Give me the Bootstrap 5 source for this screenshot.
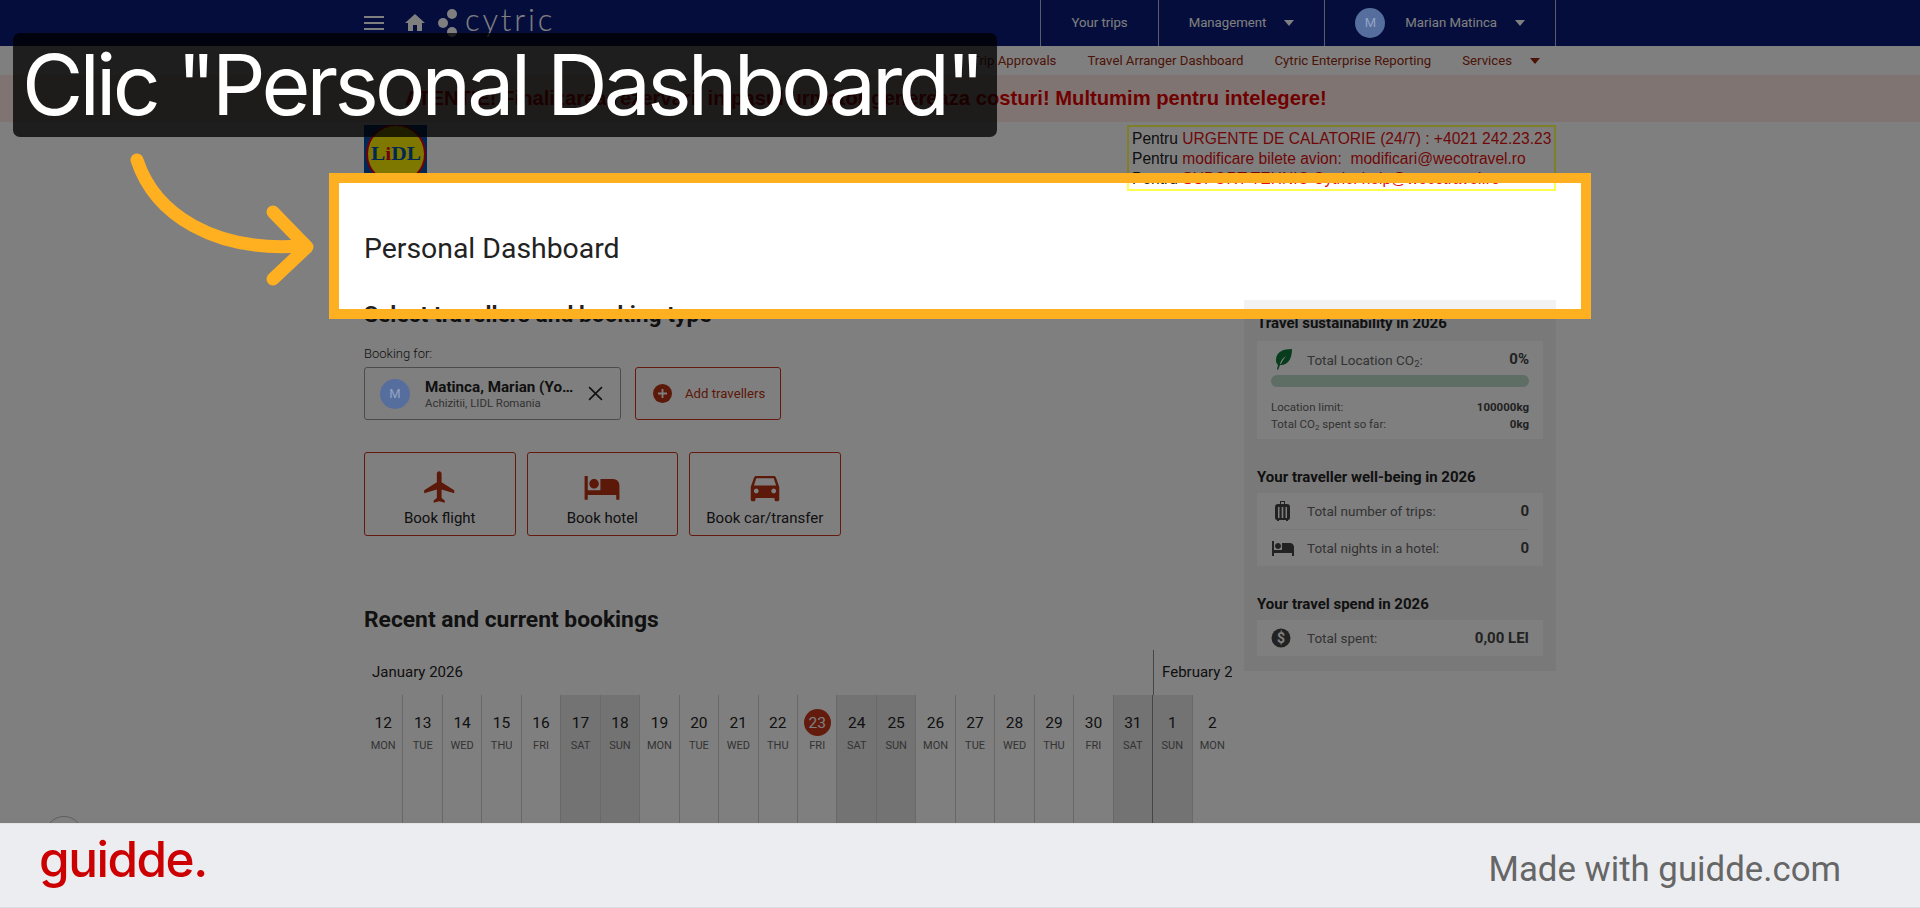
<!DOCTYPE html>
<html lang="en">
<head>
    <meta charset="UTF-8">
    <title>cytric - Personal Dashboard</title>
    <link href="https://cdn.jsdelivr.net/npm/bootstrap@5.3.0/dist/css/bootstrap.min.css" rel="stylesheet">
    <style>
        html, body { height: 100%; }
        body { font-family: Roboto, "Liberation Sans", sans-serif; color: #222; background: #fff; overflow: hidden; }
        .screen { position: relative; height: 908px; overflow: hidden; display: flex; flex-direction: column; }
        .page-body { flex: 1 1 auto; min-height: 0; overflow: hidden; }
        .wrap { width: 1192px; margin: 0 auto; }

        /* top bars */
        .top-bar { background: #081a78; height: 46px; color: #fff; font-size: 13.2px; padding: 0; }
        .top-item { height: 46px; padding: 0 30px 1px; border-left: 1px solid rgba(255,255,255,.7); display: flex; align-items: center; }
        .top-item.last-item { border-right: 1px solid rgba(255,255,255,.7); }
        .caret-down { width: 0; height: 0; border-left: 5px solid transparent; border-right: 5px solid transparent; border-top: 6px solid currentColor; margin-left: 18px; }
        .avatar { position: relative; z-index: 11; width: 30px; height: 30px; background: #566e9e; color: #93a3c2; font-size: 13px; display: flex; align-items: center; justify-content: center; flex: none; }
        .home-ico { margin-left: 19px; }
        .dots-ico { margin-left: 10px; }
        .brand-name { font-family: Lato, sans-serif; font-size: 31px; font-weight: 300; letter-spacing: 2.8px; color: #fff; line-height: 1; margin-left: 6px; padding-bottom: 8px; }
        .sub-bar { height: 30px; font-size: 13.2px; color: #96280c; }
        .sub-bar span { margin-left: 31px; }
        .sub-bar .caret-down { margin-left: 18px; margin-right: 16px; }
        .alert-strip { height: 47px; background: #ffe9e2; color: #e00000; font-family: "Liberation Sans", sans-serif; font-weight: 700; font-size: 20.2px; }
        .alert-strip .wrap { padding-left: 41px; line-height: 47px; white-space: nowrap; }

        /* contact + title */
        .head-row { margin-top: 3px; height: 66px; }
        .contact-box { width: 429px; height: 66px; border: 2px solid #ffff50; padding: 2px 3px 0; font-family: "Liberation Sans", sans-serif; font-size: 15.6px; line-height: 20px; color: #222; white-space: pre; overflow: hidden; }
        .contact-box em { font-style: normal; color: #e01010; }
        .page-title { font-size: 28.4px; line-height: 34px; margin: 41px 0 34px; font-weight: 400; }

        /* left column */
        .left-col { width: 868px; flex: none; padding-top: 3px; }
        .sec-title { font-size: 22.8px; line-height: 24px; font-weight: 700; margin: 0; white-space: nowrap; }
        .for-label { font-size: 13px; line-height: 18px; font-weight: 300; margin-top: 18px; }
        .traveller-box { width: 257px; height: 53px; border: 1px solid #999; border-radius: 3px; padding: 0 17px 0 15px; margin-top: 4px; }
        .traveller-info { margin-left: 15px; }
        .traveller-name { font-size: 15.2px; font-weight: 700; line-height: 18px; width: 150px; overflow: hidden; text-overflow: ellipsis; white-space: nowrap; }
        .traveller-sub { font-size: 11.4px; line-height: 14px; color: #666; }
        .add-btn { width: 146px; height: 53px; margin-top: 4px; margin-left: 14px; border: 1px solid #c8351a; border-radius: 3px; padding: 0 0 0 17px; color: #b83010; font-size: 13.2px; background: none; }
        .add-btn span { margin-left: 13px; }
        .book-btn { width: 151.5px; height: 84px; border: 1px solid #c8351a; border-radius: 3px; padding: 8px 0 0; font-size: 15px; color: #222; line-height: 20px; background: none; }
        .book-btn svg { display: block; margin: 0 auto 2px; }
        .book-row { margin-top: 32px; gap: 11px; }

        /* calendar */
        .cal-title { margin-top: 72px; }
        .cal-head, .cal-days { display: grid; grid-template-columns: repeat(22, 1fr); width: 868px; }
        .cal-head { margin-top: 18px; height: 45px; font-size: 15px; line-height: 45px; white-space: nowrap; }
        .cal-jan { grid-column: span 20; padding-left: 8px; }
        .cal-feb { grid-column: span 2; padding-left: 8px; overflow: hidden; border-left: 1px solid #8a8a8a; }
        .cal-day { height: 140px; border-right: 1px solid #d0d0d0; text-align: center; padding-top: 14px; }
        .cal-day:last-child { border-right: 0; }
        .cal-day.off { background: #e6e6e6; border-right-color: #d2d2d2; }
        .cal-day.month-end { border-right-color: #8a8a8a; }
        .day-num { width: 27px; height: 27px; margin: 0 auto; font-size: 15.5px; line-height: 28px; }
        .day-num.today { background: #c4361a; color: #fff; border-radius: 50%; }
        .day-name { font-size: 11px; line-height: 14px; margin-top: 3px; color: #666; }

        /* sidebar */
        .side-panel { width: 312px; flex: none; margin-left: 12px; background: #f2f2f2; padding: 13px 13px 15px; align-self: flex-start; }
        .side-title { font-size: 15px; line-height: 20px; font-weight: 700; margin: 0 0 8px; white-space: nowrap; }
        .side-title.gap-top { margin-top: 28px; margin-bottom: 6px; }
        .side-box { background: #fff; padding: 0 14px; font-size: 13.5px; color: #666; }
        .side-row { height: 36px; display: flex; align-items: center; }
        .side-row + .side-row { border-top: 1px solid #eee; height: 37px; }
        .side-ico { width: 36px; flex: none; display: flex; align-items: center; }
        .side-val { margin-left: auto; font-weight: 700; font-size: 15px; color: #444; }
        .side-box sub { font-size: 70%; line-height: 0; }
        .co2-bar { height: 12px; border-radius: 6px; background: #bcdccb; margin-top: 5px; }
        .co2-rows { font-size: 11.5px; line-height: 17px; margin-top: 12px; padding-bottom: 6px; }
        .co2-rows b { color: #444; }

        /* guide layers */
        .spot { position: absolute; left: 329px; top: 173px; width: 1262px; height: 146px; border: 10px solid #ffb020; box-shadow: 0 0 0 2400px rgba(0,0,0,.5); z-index: 10; pointer-events: none; }
        .caption { position: absolute; left: 13px; top: 33px; width: 984px; height: 104px; background: rgba(0,0,0,.76); border-radius: 7px; color: #fff; font-family: Inter, sans-serif; font-size: 84px; line-height: 104px; padding-left: 9px; white-space: nowrap; z-index: 20; letter-spacing: -3.8px; }
        .guide-arrow { position: absolute; left: 0; top: 0; z-index: 20; }
        .chat-ring { position: absolute; left: 45px; top: 816px; width: 38px; height: 38px; border: 1px solid #bbb; border-radius: 50%; }
        .made-bar { flex: none; height: 85px; background: #ecedf0; border-top: 1px solid #e2e3e6; border-bottom: 1px solid #dcdde0; position: relative; z-index: 30; padding: 0 79px 0 39px; }
        .made-logo { font-family: Inter, sans-serif; font-size: 49.5px; font-weight: 500; color: #cc0000; letter-spacing: -1.5px; line-height: 1; padding-bottom: 12px; }
        .made-text { font-size: 34.8px; color: #666; padding-top: 8px; }
    </style>
</head>
<body>
<div class="screen">
    <nav class="navbar top-bar">
        <div class="wrap d-flex align-items-center">
            <svg width="20" height="14" viewBox="0 0 20 14" fill="#fff"><rect width="20" height="2"/><rect y="6" width="20" height="2"/><rect y="12" width="20" height="2"/></svg>
            <svg class="home-ico" width="24" height="24" viewBox="0 0 24 24" fill="#fff"><path d="M10 20v-6h4v6h5v-8h3L12 3 2 12h3v8z"/></svg>
            <svg class="dots-ico" width="22" height="36" viewBox="0 0 22 36" fill="#fff"><circle cx="15" cy="9" r="5"/><circle cx="6" cy="18" r="5"/><circle cx="15" cy="27" r="5"/></svg>
            <span class="brand-name">cytric</span>
            <div class="ms-auto d-flex">
                <div class="top-item">Your trips</div>
                <div class="top-item">Management<i class="caret-down"></i></div>
                <div class="top-item last-item"><span class="avatar rounded-circle">M</span><span class="ms-3 ps-1">Marian Matinca</span><i class="caret-down"></i></div>
            </div>
        </div>
    </nav>
    <div class="wrap sub-bar d-flex align-items-center justify-content-end">
        <span>Trip Approvals</span><span>Travel Arranger Dashboard</span><span>Cytric Enterprise Reporting</span><span>Services</span><i class="caret-down"></i>
    </div>
    <div class="alert-strip">
        <div class="wrap">ATENTIE! Finalizarea rezervarii in pasul urmator genereaza costuri! Multumim pentru intelegere!</div>
    </div>

    <div class="page-body">
        <div class="wrap">
            <div class="head-row d-flex justify-content-between">
                <svg width="63" height="58" viewBox="0 0 63 58">
                    <rect width="63" height="58" fill="#0050aa"/>
                    <circle cx="32" cy="29" r="29" fill="#fff000" stroke="#e2001a" stroke-width="2"/>
                    <text x="32" y="35" text-anchor="middle" textLength="50" lengthAdjust="spacingAndGlyphs" font-family="Liberation Serif, serif" font-weight="700" font-size="19" fill="#0050aa">L<tspan fill="#e2001a">i</tspan>DL</text>
                </svg>
                <div class="contact-box">Pentru <em>URGENTE DE CALATORIE (24/7) : +4021 242.23.23</em>
Pentru <em>modificare bilete avion:  modificari@wecotravel.ro</em>
Pentru <em>SUPORT TEHNIC Cytric: help@wecotravel.ro</em></div>
            </div>

            <h1 class="page-title">Personal Dashboard</h1>

            <div class="d-flex">
                <div class="left-col">
                    <h2 class="sec-title">Select travellers and booking type</h2>
                    <div class="for-label">Booking for:</div>
                    <div class="d-flex">
                        <div class="traveller-box d-flex align-items-center">
                            <span class="avatar rounded-circle">M</span>
                            <div class="traveller-info">
                                <div class="traveller-name">Matinca, Marian (Yourself)</div>
                                <div class="traveller-sub">Achizitii, LIDL Romania</div>
                            </div>
                            <svg class="ms-auto" width="15" height="15" viewBox="0 0 14 14" stroke="#222" stroke-width="1.5"><path d="M1 1l12 12M13 1L1 13"/></svg>
                        </div>
                        <button class="btn add-btn d-flex align-items-center">
                            <svg width="19" height="19" viewBox="0 0 19 19"><circle cx="9.5" cy="9.5" r="9.5" fill="#b83010"/><path d="M9.5 5v9M5 9.5h9" stroke="#fff" stroke-width="1.8"/></svg>
                            <span>Add travellers</span>
                        </button>
                    </div>
                    <div class="d-flex book-row">
                        <button class="btn book-btn">
                            <svg width="38" height="38" viewBox="0 0 24 24" fill="#b83010"><path d="M21 16v-2l-8-5V3.5c0-.83-.67-1.5-1.5-1.5S10 2.67 10 3.5V9l-8 5v2l8-2.5V19l-2 1.5V22l3.5-1 3.5 1v-1.5L13 19v-5.5l8 2.5z"/></svg>
                            Book flight
                        </button>
                        <button class="btn book-btn">
                            <svg width="38" height="38" viewBox="0 0 24 24" fill="#b83010"><path d="M7 13c1.66 0 3-1.34 3-3S8.66 7 7 7s-3 1.34-3 3 1.34 3 3 3zm12-6h-8v7H3V5H1v15h2v-3h18v3h2v-9c0-2.21-1.79-4-4-4z"/></svg>
                            Book hotel
                        </button>
                        <button class="btn book-btn">
                            <svg width="38" height="38" viewBox="0 0 24 24" fill="#b83010"><path d="M18.92 6.01C18.72 5.42 18.16 5 17.5 5h-11c-.66 0-1.21.42-1.42 1.01L3 12v8c0 .55.45 1 1 1h1c.55 0 1-.45 1-1v-1h12v1c0 .55.45 1 1 1h1c.55 0 1-.45 1-1v-8l-2.08-5.99zM6.5 16c-.83 0-1.5-.67-1.5-1.5S5.67 13 6.5 13s1.5.67 1.5 1.5S7.33 16 6.5 16zm11 0c-.83 0-1.5-.67-1.5-1.5s.67-1.5 1.5-1.5 1.5.67 1.5 1.5-.67 1.5-1.5 1.5zM5 11l1.5-4.5h11L19 11H5z"/></svg>
                            Book car/transfer
                        </button>
                    </div>
                    <h2 class="sec-title cal-title">Recent and current bookings</h2>
                    <div class="cal-head">
                        <div class="cal-jan">January 2026</div>
                        <div class="cal-feb">February 2026</div>
                    </div>
                    <div class="cal-days" id="cal-days"></div>
                </div>

                <aside class="side-panel">
                    <h3 class="side-title">Travel sustainability in 2026</h3>
                    <div class="side-box">
                        <div class="d-flex align-items-center pt-2">
                            <span class="side-ico"><svg class="ms-1" width="18" height="21" viewBox="0 0 18 21"><path d="M17 0C8 0 1 3 1 11c0 3 1 4 2 5l-1 4 1 1 2-5c2 0 5 0 8-3 3-3 4-8 4-13zM5 15c1-4 3-6 6-8-2 3-4 5-5 8z" fill="#0f7a3a" fill-rule="evenodd"/></svg></span>
                            <span>Total Location CO<sub>2</sub>:</span><span class="side-val lh-1">0%</span>
                        </div>
                        <div class="progress co2-bar"><div class="progress-bar" style="width:0%"></div></div>
                        <div class="co2-rows">
                            <div class="d-flex justify-content-between"><span>Location limit:</span><b>100000kg</b></div>
                            <div class="d-flex justify-content-between"><span>Total CO<sub>2</sub> spent so far:</span><b>0kg</b></div>
                        </div>
                    </div>
                    <h3 class="side-title gap-top">Your traveller well-being in 2026</h3>
                    <div class="side-box">
                        <div class="side-row">
                            <span class="side-ico"><svg class="ms-1" width="15" height="20" viewBox="0 0 15 20" fill="#444"><path d="M5 0h5v3h2a3 3 0 0 1 3 3v11a2 2 0 0 1-2 2v1h-2v-1H4v1H2v-1a2 2 0 0 1-2-2V6a3 3 0 0 1 3-3h2zm1 1v2h3V1zM3 6v11h1.5V6zm3.7 0v11h1.6V6zm3.8 0v11H12V6z" fill-rule="evenodd"/></svg></span>
                            <span>Total number of trips:</span><span class="side-val">0</span>
                        </div>
                        <div class="side-row">
                            <span class="side-ico"><svg width="24" height="24" viewBox="0 0 24 24" fill="#444"><path d="M7 13c1.66 0 3-1.34 3-3S8.66 7 7 7s-3 1.34-3 3 1.34 3 3 3zm12-6h-8v7H3V5H1v15h2v-3h18v3h2v-9c0-2.21-1.79-4-4-4z"/></svg></span>
                            <span>Total nights in a hotel:</span><span class="side-val">0</span>
                        </div>
                    </div>
                    <h3 class="side-title gap-top">Your travel spend in 2026</h3>
                    <div class="side-box">
                        <div class="side-row">
                            <span class="side-ico"><svg width="20" height="20" viewBox="0 0 20 20"><circle cx="10" cy="10" r="9.5" fill="#444"/><text x="10" y="15" text-anchor="middle" font-family="Roboto, sans-serif" font-weight="700" font-size="14" fill="#fff">$</text></svg></span>
                            <span>Total spent:</span><span class="side-val">0,00 LEI</span>
                        </div>
                    </div>
                </aside>
            </div>
        </div>
    </div>

    <div class="chat-ring"></div>
    <div class="spot"></div>
    <div class="caption">Clic "Personal Dashboard"</div>
    <svg class="guide-arrow" width="340" height="300" viewBox="0 0 340 300" fill="none" stroke="#ffb020" stroke-width="13" stroke-linecap="round" stroke-linejoin="round">
        <path d="M137 160C155 215 215 252 300 246"/>
        <path d="M273 212L307 247L273 279"/>
    </svg>

    <footer class="made-bar d-flex align-items-center justify-content-between">
        <span class="made-logo">guidde.</span>
        <span class="made-text">Made with guidde.com</span>
    </footer>
</div>

<script>
    // calendar columns, Jan 12 to Feb 2
    const names = ['MON', 'TUE', 'WED', 'THU', 'FRI', 'SAT', 'SUN'];
    const dayNums = [12, 13, 14, 15, 16, 17, 18, 19, 20, 21, 22, 23, 24, 25, 26, 27, 28, 29, 30, 31, 1, 2];
    const calDays = document.getElementById('cal-days');
    dayNums.forEach((num, i) => {
        const name = names[i % 7];
        const cell = document.createElement('div');
        cell.className = 'cal-day' + (i % 7 > 4 ? ' off' : '') + (i === 19 ? ' month-end' : '');
        cell.innerHTML = `<div class="day-num${num === 23 ? ' today' : ''}">${num}</div><div class="day-name">${name}</div>`;
        calDays.appendChild(cell);
    });
</script>
<script src="https://cdn.jsdelivr.net/npm/bootstrap@5.3.0/dist/js/bootstrap.bundle.min.js"></script>
</body>
</html>
